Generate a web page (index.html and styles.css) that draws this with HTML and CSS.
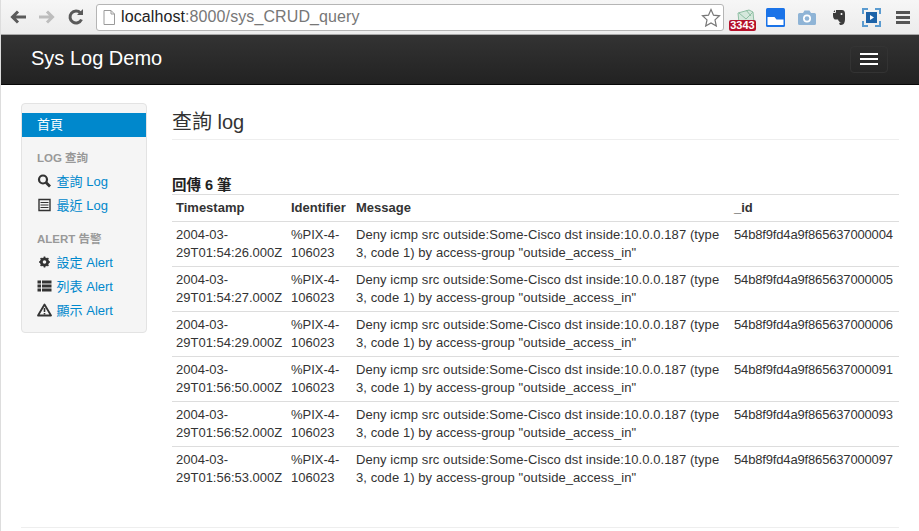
FILE: index.html
```html
<!DOCTYPE html>
<html>

<head>
    <title>Sys Log Demo</title>
    <link rel="stylesheet" href="styles.css">
</head>

<body>
    <div class="chrome">
        <svg class="nav-icon" width="18" height="16" viewBox="0 0 18 16"><path d="M17 8H4M9 2.500 3.500 8 9 13.500" fill="none" stroke="#5a5a5a" stroke-width="3"/></svg>
        <svg class="nav-icon" width="18" height="16" viewBox="0 0 18 16"><path d="M1 8h13M9 2.500 14.500 8 9 13.500" fill="none" stroke="#bdbdbd" stroke-width="3"/></svg>
        <svg class="nav-icon" width="18" height="18" viewBox="0 0 18 18"><path d="M14.500 11.500A6 6 0 1 1 13.500 5" fill="none" stroke="#5a5a5a" stroke-width="3"/><path d="M10 7h6V1z" fill="#5a5a5a"/></svg>
        <div class="omnibox">
            <svg width="12" height="15" viewBox="0 0 12 15"><path d="M1 .5h7l3.500 3.500v10.500H1z" fill="#fff" stroke="#9a9a9a"/><path d="M8 .5V4h3.500" fill="none" stroke="#9a9a9a"/></svg>
            <span class="url"><span class="host">localhost</span>:8000/sys_CRUD_query</span>
            <svg class="star" width="20" height="19" viewBox="0 0 20 19"><path d="m10 1.500 2.500 5.700 6 .6-4.500 4.100 1.300 6.100-5.300-3.100-5.300 3.100L6 11.900 1.500 7.800l6-.6z" fill="#fff" stroke="#777" stroke-width="1.200"/></svg>
        </div>
        <div class="extensions">
            <div class="ext ext-mail">
                <svg width="18" height="14" viewBox="0 0 18 14"><path d="M1 4 12 1l4 2 1 11H2z" fill="#d5e8dc" stroke="#8fbfa4"/><path d="m2 4 7 6 7-7M9 1l5 6" fill="none" stroke="#8fbfa4"/></svg>
                <span class="badge">3343</span>
            </div>
            <div class="ext"><svg width="19" height="19" viewBox="0 0 19 19"><rect width="19" height="19" rx="1.500" fill="#1a73e8"/><path d="M1.500 9h7l2 2.500h7V17h-16z" fill="#fff"/></svg></div>
            <div class="ext"><svg width="18" height="15" viewBox="0 0 18 15"><path d="M1.500 3H5l1.500-2.500h5L13 3h3.500A1.500 1.500 0 0 1 18 4.500V13.500A1.500 1.500 0 0 1 16.500 15h-15A1.500 1.500 0 0 1 0 13.500V4.500A1.500 1.500 0 0 1 1.500 3z" fill="#8fb4d6"/><circle cx="9" cy="8.500" r="4" fill="#fff"/><circle cx="9" cy="8.500" r="2.300" fill="#8fb4d6"/></svg></div>
            <div class="ext"><svg width="14" height="16" viewBox="0 0 14 16"><path d="M3 1h7c2 0 3 1.500 3 4v5c0 3-1 6-4 6-2 0-2.500-2.500-.5-2.500H10c-2 0-3.500-1-4-3H3.500C1.500 10.500 1 8 1 6V3.500z" fill="#3a3a3a"/><path d="M1 3.500h2.500V1" fill="none" stroke="#eee"/><circle cx="9.500" cy="5" r="1" fill="#fff"/></svg></div>
            <div class="ext"><svg width="19" height="19" viewBox="0 0 19 19"><path d="M1 6V1h5M13 1h5v5M18 13v5h-5M6 18H1v-5" fill="none" stroke="#5b9bd0" stroke-width="2"/><rect x="4" y="4" width="11" height="11" fill="#1c62a8"/><path d="m8 7 4 2.500-4 2.500z" fill="#fff"/></svg></div>
            <div class="ext"><svg width="14" height="13" viewBox="0 0 14 13"><path d="M0 1.500h14M0 6.500h14M0 11.500h14" stroke="#555" stroke-width="3"/></svg></div>
        </div>
    </div>

    <nav class="navbar">
        <a class="brand">Sys Log Demo</a>
        <button class="toggle"><span></span><span></span><span></span></button>
    </nav>

    <div class="page">
        <div class="row">
            <aside class="sidebar">
                <a class="side-active">首頁</a>
                <div class="side-header">LOG 查詢</div>
                <a class="side-link">
                    <svg width="14" height="14" viewBox="0 0 14 14"><circle cx="5.500" cy="5.500" r="4" fill="none" stroke="#333" stroke-width="2.200"/><path d="m8.500 8.500 4 4" stroke="#333" stroke-width="2.800"/></svg>
                    查詢 Log
                </a>
                <a class="side-link">
                    <svg width="14" height="14" viewBox="0 0 14 14"><path d="M1.500 1.500h11v11h-11z" fill="none" stroke="#333" stroke-width="1.400"/><path d="M3 4.500h8M3 7h8M3 9.500h8" stroke="#333" stroke-width="1.200"/></svg>
                    最近 Log
                </a>
                <div class="side-header side-gap">ALERT 告警</div>
                <a class="side-link">
                    <svg width="14" height="14" viewBox="0 0 14 14"><circle cx="7" cy="7" r="3.200" fill="none" stroke="#333" stroke-width="2.800"/><path d="M7 1.500v2M7 10.500v2M1.500 7h2M10.500 7h2M3.100 3.100l1.400 1.400M9.500 9.500l1.400 1.400M10.900 3.100 9.500 4.500M4.500 9.500l-1.400 1.400" stroke="#333" stroke-width="1.600"/></svg>
                    設定 Alert
                </a>
                <a class="side-link">
                    <svg width="14" height="14" viewBox="0 0 14 14"><path d="M0 1.500h3.500v3H0zM4.500 1.500H14v3H4.500zM0 5.500h3.500v3H0zM4.500 5.500H14v3H4.500zM0 9.500h3.500v3H0zM4.500 9.500H14v3H4.500z" fill="#333"/></svg>
                    列表 Alert
                </a>
                <a class="side-link">
                    <svg width="15" height="14" viewBox="0 0 15 14"><path d="M7.500 1.500 14 12.500H1z" fill="none" stroke="#333" stroke-width="1.800" stroke-linejoin="round"/><path d="M7.500 5v4M7.500 10v1.500" stroke="#333" stroke-width="1.600"/></svg>
                    顯示 Alert
                </a>
            </aside>

            <main class="content">
                <h2 class="page-title">查詢 log</h2>
                <div class="count">回傳 6 筆</div>
                <table class="log-table">
                    <thead>
                        <tr>
                            <th>Timestamp</th>
                            <th>Identifier</th>
                            <th>Message</th>
                            <th>_id</th>
                        </tr>
                    </thead>
                    <tbody>
                        <tr>
                            <td>2004-03-29T01:54:26.000Z</td>
                            <td>%PIX-4-106023</td>
                            <td>Deny icmp src outside:Some-Cisco dst inside:10.0.0.187 (type 3, code 1) by access-group "outside_access_in"</td>
                            <td>54b8f9fd4a9f865637000004</td>
                        </tr>
                        <tr>
                            <td>2004-03-29T01:54:27.000Z</td>
                            <td>%PIX-4-106023</td>
                            <td>Deny icmp src outside:Some-Cisco dst inside:10.0.0.187 (type 3, code 1) by access-group "outside_access_in"</td>
                            <td>54b8f9fd4a9f865637000005</td>
                        </tr>
                        <tr>
                            <td>2004-03-29T01:54:29.000Z</td>
                            <td>%PIX-4-106023</td>
                            <td>Deny icmp src outside:Some-Cisco dst inside:10.0.0.187 (type 3, code 1) by access-group "outside_access_in"</td>
                            <td>54b8f9fd4a9f865637000006</td>
                        </tr>
                        <tr>
                            <td>2004-03-29T01:56:50.000Z</td>
                            <td>%PIX-4-106023</td>
                            <td>Deny icmp src outside:Some-Cisco dst inside:10.0.0.187 (type 3, code 1) by access-group "outside_access_in"</td>
                            <td>54b8f9fd4a9f865637000091</td>
                        </tr>
                        <tr>
                            <td>2004-03-29T01:56:52.000Z</td>
                            <td>%PIX-4-106023</td>
                            <td>Deny icmp src outside:Some-Cisco dst inside:10.0.0.187 (type 3, code 1) by access-group "outside_access_in"</td>
                            <td>54b8f9fd4a9f865637000093</td>
                        </tr>
                        <tr>
                            <td>2004-03-29T01:56:53.000Z</td>
                            <td>%PIX-4-106023</td>
                            <td>Deny icmp src outside:Some-Cisco dst inside:10.0.0.187 (type 3, code 1) by access-group "outside_access_in"</td>
                            <td>54b8f9fd4a9f865637000097</td>
                        </tr>
                    </tbody>
                </table>
            </main>
        </div>
        <hr class="foot-rule">
    </div>
</body>

</html>
```

FILE: styles.css
```css
* {
    box-sizing: border-box;
}

html,
body {
    height: 531px;
    overflow: hidden;
}

body {
    margin: 0;
    font-family: "Liberation Sans", "Noto Sans CJK TC", sans-serif;
    font-size: 13px;
    line-height: 18px;
    color: #333;
    background-color: #fff;
    border-left: 1px solid #ddd;
}

.chrome {
    display: flex;
    align-items: center;
    height: 35px;
    margin-left: -1px;
    padding-left: 9px;
    background: linear-gradient(#f6f6f6, #ececec);
    border-bottom: 1px solid #a8a8a8;
}

.nav-icon {
    flex: none;
    margin-right: 11px;
}

.omnibox {
    display: flex;
    align-items: center;
    flex: none;
    width: 628px;
    height: 27px;
    padding: 0 2px 0 6px;
    background-color: #fff;
    border: 1px solid #b5b5b5;
    border-radius: 3px;
}

.url {
    flex: 1;
    margin-left: 6px;
    font-size: 16px;
    letter-spacing: .1px;
    color: #777;
}

.host {
    color: #222;
}

.extensions {
    display: flex;
    flex: 1;
    padding-left: 3px;
}

.ext {
    display: flex;
    align-items: center;
    justify-content: center;
    flex: none;
    width: 32px;
    height: 24px;
}

.ext-mail {
    position: relative;
    align-items: flex-start;
}

.ext-mail svg {
    margin-top: 4px;
    margin-left: 6px;
}

.badge {
    position: absolute;
    left: 2px;
    bottom: -2px;
    width: 27px;
    height: 11px;
    font-size: 11px;
    font-weight: bold;
    line-height: 11px;
    text-align: center;
    color: #fff;
    background-color: #b5122b;
    border-radius: 2px;
}

.navbar {
    display: flex;
    align-items: center;
    justify-content: space-between;
    height: 50px;
    margin-left: -1px;
    padding: 0 31px;
    background: linear-gradient(#333, #222);
    border-bottom: 1px solid #080808;
}

.brand {
    margin-bottom: 3px;
    font-size: 20px;
    color: #fff;
}

.toggle {
    display: flex;
    flex-direction: column;
    gap: 3px;
    width: 38px;
    height: 27px;
    padding: 6px 9px;
    background: transparent;
    border: 1px solid #333;
    border-radius: 4px;
}

.toggle span {
    display: block;
    width: 18px;
    height: 2px;
    flex: none;
    background-color: #fff;
}

.page {
    padding: 18px 20px 0;
}

.row {
    display: flex;
    align-items: flex-start;
    gap: 25px;
}

.sidebar {
    flex: none;
    width: 126px;
    height: 230px;
    padding: 9px 0;
    background-color: #f5f5f5;
    border: 1px solid #e3e3e3;
    border-radius: 4px;
}

.sidebar a {
    display: block;
}

.side-active {
    height: 24px;
    padding-left: 15px;
    line-height: 24px;
    color: #fff;
    background-color: #08c;
}

.side-header {
    height: 20px;
    margin-top: 13px;
    padding-left: 15px;
    font-size: 11.5px;
    font-weight: bold;
    line-height: 17px;
    color: #999;
}

.side-link {
    height: 24px;
    padding-left: 15px;
    line-height: 24px;
    color: #08c;
}

.side-link svg {
    display: inline-block;
    width: 15px;
    margin-right: 1px;
    vertical-align: -2px;
}

.content {
    flex: 1;
    min-width: 0;
}

.page-title {
    height: 37px;
    margin: 0;
    font-size: 20px;
    font-weight: normal;
    line-height: 38px;
    color: #333;
    border-bottom: 1px solid #eee;
}

.count {
    height: 17px;
    margin-top: 37px;
    font-size: 14.5px;
    font-weight: bold;
    line-height: 17px;
    color: #222;
}

.log-table {
    width: 100%;
    border-collapse: collapse;
    border-top: 1px solid #ddd;
}

.log-table th,
.log-table td {
    padding: 4px;
    text-align: left;
    vertical-align: top;
}

.log-table th {
    border-bottom: 1px solid #ddd;
}

.log-table td {
    border-top: 1px solid #ddd;
}

.log-table td:nth-child(3) {
    letter-spacing: .08px;
}

.log-table td:nth-child(4) {
    letter-spacing: -.16px;
}

.log-table th:nth-child(1) {
    width: 115px;
}

.log-table th:nth-child(2) {
    width: 65px;
}

.log-table th:nth-child(3) {
    width: 378px;
}

.foot-rule {
    height: 1px;
    margin: 36px 0 0;
    background-color: #eee;
    border: none;
}
```
